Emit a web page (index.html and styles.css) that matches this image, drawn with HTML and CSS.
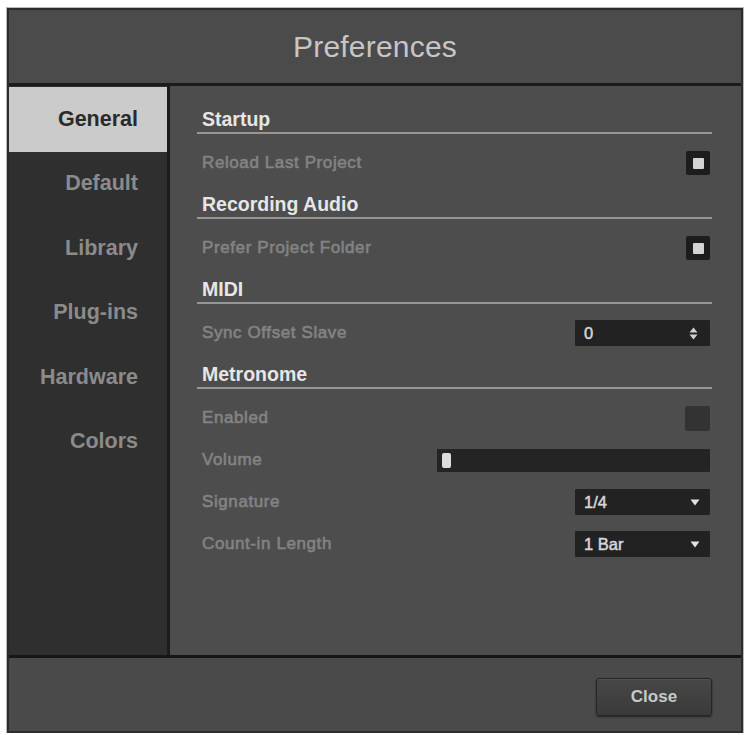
FILE: index.html
```html
<!DOCTYPE html>
<html lang="en">
<head>
<meta charset="utf-8">
<title>Preferences</title>
<link rel="stylesheet" href="styles.css">
</head>
<body>
<div class="dialog">
  <header class="dialog-header">Preferences</header>
  <div class="dialog-body">
    <nav class="sidebar">
      <div class="tab active">General</div>
      <div class="tab">Default</div>
      <div class="tab">Library</div>
      <div class="tab">Plug-ins</div>
      <div class="tab">Hardware</div>
      <div class="tab">Colors</div>
    </nav>
    <main class="panel">
      <section class="group">
        <h2 class="group-title">Startup</h2>
        <div class="row">
          <span class="label">Reload Last Project</span>
          <span class="check on"><span class="check-mark"></span></span>
        </div>
      </section>
      <section class="group">
        <h2 class="group-title">Recording Audio</h2>
        <div class="row">
          <span class="label">Prefer Project Folder</span>
          <span class="check on"><span class="check-mark"></span></span>
        </div>
      </section>
      <section class="group">
        <h2 class="group-title">MIDI</h2>
        <div class="row">
          <span class="label">Sync Offset Slave</span>
          <span class="field">
            <span class="field-value">0</span>
            <svg class="spin" width="9" height="13" viewBox="0 0 9 13"><path d="M4.5 0.5 L8.5 5.5 L0.5 5.5 Z M4.5 12.5 L8.5 7.5 L0.5 7.5 Z" fill="#d2d2d2"/></svg>
          </span>
        </div>
      </section>
      <section class="group">
        <h2 class="group-title">Metronome</h2>
        <div class="row">
          <span class="label">Enabled</span>
          <span class="check off"></span>
        </div>
        <div class="row">
          <span class="label">Volume</span>
          <span class="slider"><span class="slider-handle"></span></span>
        </div>
        <div class="row">
          <span class="label">Signature</span>
          <span class="field">
            <span class="field-value">1/4</span>
            <svg class="caret" width="10" height="7" viewBox="0 0 10 7"><path d="M0.5 0.5 L9.5 0.5 L5 6.5 Z" fill="#e2e2e2"/></svg>
          </span>
        </div>
        <div class="row">
          <span class="label">Count-in Length</span>
          <span class="field">
            <span class="field-value">1 Bar</span>
            <svg class="caret" width="10" height="7" viewBox="0 0 10 7"><path d="M0.5 0.5 L9.5 0.5 L5 6.5 Z" fill="#e2e2e2"/></svg>
          </span>
        </div>
      </section>
    </main>
  </div>
  <footer class="dialog-footer">
    <button class="btn">Close</button>
  </footer>
</div>
</body>
</html>
```
FILE: styles.css
```css
html, body {
  margin: 0;
  padding: 0;
  background: #ffffff;
}

body {
  padding: 8px 0 0 7px;
  font-family: "Liberation Sans", Arial, sans-serif;
}

.dialog {
  width: 732px;
  height: 721px;
  border: 2px solid #2c2c2c;
  box-shadow: 0 0 0 1px #b9b9b9;
  background: #4b4b4b;
  display: flex;
  flex-direction: column;
}

/* title bar */
.dialog-header {
  height: 73px;
  flex: none;
  border-bottom: 3px solid #1b1b1b;
  background: #4b4b4b;
  color: #c6c6c6;
  font-size: 30px;
  letter-spacing: 0.2px;
  display: flex;
  align-items: center;
  justify-content: center;
}

.dialog-body {
  flex: 1;
  display: flex;
  min-height: 0;
}

/* category list */
.sidebar {
  width: 158px;
  flex: none;
  background: #2f2f2f;
  border-right: 3px solid #1c1c1c;
  padding-top: 1px;
}

.tab {
  height: 64.5px;
  display: flex;
  align-items: center;
  justify-content: flex-end;
  padding-right: 29px;
  font-size: 21.5px;
  font-weight: bold;
  color: #8b8b8b;
}

.tab.active {
  background: #cbcbcb;
  color: #2a2a2a;
}

/* settings panel */
.panel {
  flex: 1;
  background: #4d4d4d;
  padding: 20px 29px 0 27px;
}

.group {
  margin-bottom: 7px;
}

.group-title {
  margin: 0 0 8px;
  padding-left: 5px;
  line-height: 26px;
  font-size: 19.5px;
  font-weight: bold;
  color: #e6e6e6;
  border-bottom: 2px solid #979797;
}

.row {
  height: 42px;
  display: flex;
  align-items: center;
  justify-content: space-between;
  padding: 0 2px 0 5px;
}

.label {
  font-size: 17px;
  letter-spacing: 0.6px;
  color: #838383;
  -webkit-text-stroke: 0.6px #838383;
}

/* checkbox */
.check {
  width: 24px;
  height: 24px;
  border-radius: 2px;
  display: flex;
  align-items: center;
  justify-content: center;
}

.check.on {
  background: #1d1d1d;
}

.check.off {
  width: 25px;
  height: 25px;
  background: #333333;
}

.check-mark {
  width: 11px;
  height: 11px;
  border-radius: 1px;
  background: #d4d4d4;
}

/* spin box and drop-down */
.field {
  width: 135px;
  height: 26px;
  box-sizing: border-box;
  background: #222222;
  border-radius: 1px;
  display: flex;
  align-items: center;
  justify-content: space-between;
  padding: 0 9px 0 9px;
}

.field-value {
  font-size: 16.5px;
  color: #d6d6d6;
  -webkit-text-stroke: 0.5px #d6d6d6;
}

.spin {
  display: block;
  margin-right: 3px;
}

.caret {
  display: block;
  margin-right: 1px;
}

/* volume slider */
.slider {
  width: 273px;
  height: 23px;
  background: #242424;
  border-radius: 1px;
  display: flex;
  align-items: center;
  padding-left: 5px;
  box-sizing: border-box;
}

.slider-handle {
  width: 9px;
  height: 15px;
  border-radius: 2px;
  background: #dcdcdc;
}

/* bottom bar */
.dialog-footer {
  height: 76px;
  flex: none;
  border-top: 3px solid #161616;
  background: #4a4a4a;
  display: flex;
  align-items: center;
  justify-content: flex-end;
  padding-right: 29px;
  padding-top: 4px;
  box-sizing: border-box;
}

.btn {
  width: 116px;
  height: 38px;
  border: 1px solid #262626;
  border-radius: 3px;
  background: linear-gradient(#474747, #3a3a3a);
  box-shadow: 0 1px 2px rgba(0, 0, 0, 0.55), inset 0 1px 0 rgba(255, 255, 255, 0.06);
  color: #c9c9c9;
  font-family: "Liberation Sans", Arial, sans-serif;
  font-size: 17px;
  font-weight: bold;
  padding: 0;
}
```
